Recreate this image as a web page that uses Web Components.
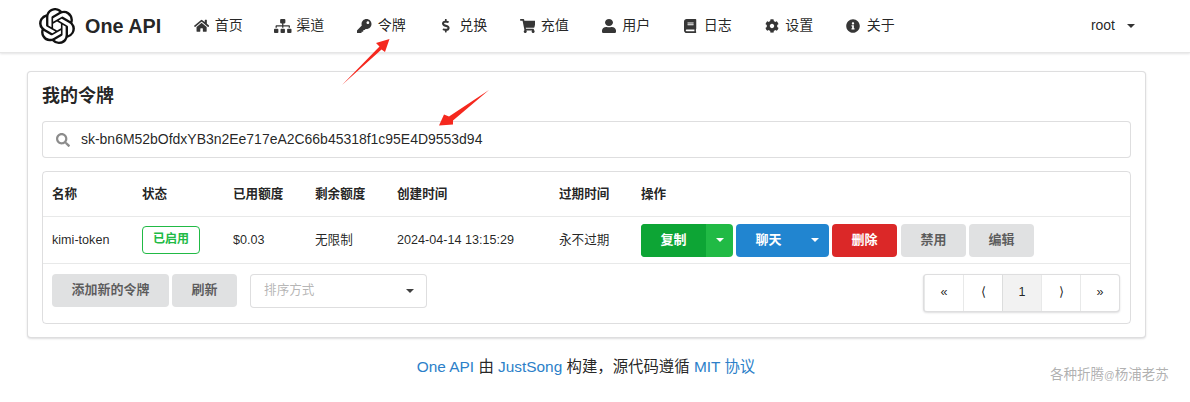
<!DOCTYPE html>
<html lang="zh">
<head>
<meta charset="utf-8">
<title>One API</title>
<style>
html,body{margin:0;padding:0;background:#fff;}
body{font:14px/1.4285 "Liberation Sans","Noto Sans CJK SC",sans-serif;color:rgba(0,0,0,.87);width:1190px;height:402px;overflow:hidden;position:relative;}
</style>
</head>
<body>
<app-nav></app-nav>
<token-page></token-page>
<app-footer></app-footer>
<water-mark>各种折腾<small>@</small>杨浦老苏</water-mark>
<red-arrow points="342,85 381.5,49.5 385,52 389.5,39 376,43 379.5,46.5"></red-arrow>
<red-arrow points="489,90 453,120.5 453,124.5 439,125.5 444,114.5 449,116.5"></red-arrow>
<script>
const ICONS={
home:['0 0 576 512','M280.37 148.26L96 300.11V464a16 16 0 0 0 16 16l112.06-.29a16 16 0 0 0 15.92-16V368a16 16 0 0 1 16-16h64a16 16 0 0 1 16 16v95.64a16 16 0 0 0 16 16.05L464 480a16 16 0 0 0 16-16V300L295.67 148.26a12.19 12.19 0 0 0-15.3 0zM571.6 251.47L488 182.56V44.05a12 12 0 0 0-12-12h-56a12 12 0 0 0-12 12v72.61L318.47 43a48 48 0 0 0-61 0L4.34 251.47a12 12 0 0 0-1.6 16.9l25.5 31A12 12 0 0 0 45.15 301l235.22-193.74a12.19 12.19 0 0 1 15.3 0L530.9 301a12 12 0 0 0 16.9-1.6l25.5-31a12 12 0 0 0-1.7-16.93z'],
sitemap:['0 0 640 512','M128 352H32c-17.67 0-32 14.33-32 32v96c0 17.67 14.33 32 32 32h96c17.67 0 32-14.33 32-32v-96c0-17.67-14.33-32-32-32zm-24-80h192v48h48v-48h192v48h48v-57.59c0-21.17-17.23-38.41-38.41-38.41H344v-64h40c17.67 0 32-14.33 32-32V32c0-17.67-14.33-32-32-32H256c-17.67 0-32 14.33-32 32v96c0 17.67 14.33 32 32 32h40v64H94.41C73.23 224 56 241.23 56 262.41V320h48v-48zm264 80h-96c-17.67 0-32 14.33-32 32v96c0 17.67 14.33 32 32 32h96c17.67 0 32-14.33 32-32v-96c0-17.67-14.33-32-32-32zm240 0h-96c-17.67 0-32 14.33-32 32v96c0 17.67 14.33 32 32 32h96c17.67 0 32-14.33 32-32v-96c0-17.67-14.33-32-32-32z'],
key:['0 0 512 512','M512 176.001C512 273.203 433.202 352 336 352c-11.22 0-22.19-1.062-32.827-3.069l-24.012 27.014A23.999 23.999 0 0 1 261.223 384H224v40c0 13.255-10.745 24-24 24h-40v40c0 13.255-10.745 24-24 24H24c-13.255 0-24-10.745-24-24v-78.059c0-6.365 2.529-12.47 7.029-16.971l161.802-161.802C163.108 213.814 160 195.271 160 176 160 78.798 238.797.001 335.999 0 433.488-.001 512 78.511 512 176.001zM336 128c0 26.51 21.49 48 48 48s48-21.49 48-48-21.49-48-48-48-48 21.49-48 48z'],
dollar:['0 0 288 512','M209.2 233.4l-108-31.6C88.7 198.2 80 186.5 80 173.5c0-16.3 13.2-29.5 29.5-29.5h66.3c12.2 0 24.2 3.7 34.2 10.5 6.1 4.1 14.3 3.1 19.5-2l34.8-34c7.1-6.9 6.1-18.4-1.8-24.5C238 74.8 207.4 64.1 176 64V16c0-8.8-7.2-16-16-16h-32c-8.8 0-16 7.2-16 16v48h-2.5C45.8 64-5.4 118.7.5 183.6c4.2 46.1 39.4 83.6 83.8 96.6l102.5 30c12.5 3.7 21.2 15.3 21.2 28.3 0 16.3-13.2 29.5-29.5 29.5h-66.3C100 368 88 364.3 78 357.5c-6.1-4.1-14.3-3.1-19.5 2l-34.8 34c-7.1 6.9-6.1 18.4 1.8 24.5 24.5 19.2 55.1 29.9 86.5 30v48c0 8.8 7.2 16 16 16h32c8.8 0 16-7.2 16-16v-48.2c46.6-.9 90.3-28.6 105.7-72.7 21.5-61.6-14.6-124.8-72.5-141.7z'],
cart:['0 0 576 512','M528.12 301.319l47.273-208C578.806 78.301 567.391 64 551.99 64H159.208l-9.166-44.81C147.758 8.021 137.93 0 126.529 0H24C10.745 0 0 10.745 0 24v16c0 13.255 10.745 24 24 24h69.883l70.248 343.435C147.325 417.1 136 435.222 136 456c0 30.928 25.072 56 56 56s56-25.072 56-56c0-15.674-6.447-29.835-16.824-40h209.647C430.447 426.165 424 440.326 424 456c0 30.928 25.072 56 56 56s56-25.072 56-56c0-22.172-12.888-41.332-31.579-50.405l5.517-24.276c3.413-15.018-8.002-29.319-23.403-29.319H218.117l-6.545-32h293.145c11.206 0 20.92-7.754 23.403-18.681z'],
user:['0 0 448 512','M224 256c70.7 0 128-57.3 128-128S294.7 0 224 0 96 57.3 96 128s57.3 128 128 128zm89.6 32h-16.7c-22.2 10.2-46.9 16-72.9 16s-50.6-5.8-72.9-16h-16.7C60.2 288 0 348.2 0 422.4V464c0 26.5 21.5 48 48 48h352c26.5 0 48-21.5 48-48v-41.6c0-74.2-60.2-134.4-134.4-134.4z'],
book:['0 0 448 512','M448 360V24c0-13.3-10.7-24-24-24H96C43 0 0 43 0 96v320c0 53 43 96 96 96h328c13.3 0 24-10.7 24-24v-16c0-7.5-3.5-14.3-8.9-18.7-4.2-15.4-4.2-59.3 0-74.7 5.4-4.3 8.9-11.1 8.9-18.6zM128 134c0-3.3 2.7-6 6-6h212c3.3 0 6 2.7 6 6v20c0 3.3-2.7 6-6 6H134c-3.3 0-6-2.7-6-6v-20zm0 64c0-3.3 2.7-6 6-6h212c3.3 0 6 2.7 6 6v20c0 3.3-2.7 6-6 6H134c-3.3 0-6-2.7-6-6v-20zm253.4 250H96c-17.7 0-32-14.3-32-32 0-17.6 14.4-32 32-32h285.4c-1.9 17.1-1.9 46.9 0 64z'],
cog:['0 0 512 512','M487.4 315.7l-42.6-24.6c4.3-23.2 4.3-47 0-70.2l42.6-24.6c4.9-2.8 7.1-8.6 5.5-14-11.1-35.6-30-67.8-54.7-94.6-3.8-4.1-10-5.1-14.8-2.3L380.8 110c-17.9-15.4-38.5-27.3-60.8-35.1V25.8c0-5.6-3.9-10.5-9.4-11.7-36.7-8.2-74.3-7.8-109.2 0-5.5 1.2-9.4 6.1-9.4 11.7V75c-22.2 7.9-42.8 19.8-60.8 35.1L88.7 85.5c-4.9-2.8-11-1.9-14.8 2.3-24.7 26.7-43.6 58.9-54.7 94.6-1.7 5.4.6 11.2 5.5 14L67.3 221c-4.3 23.2-4.3 47 0 70.2l-42.6 24.6c-4.9 2.8-7.1 8.6-5.5 14 11.1 35.6 30 67.8 54.7 94.6 3.8 4.1 10 5.1 14.8 2.3l42.6-24.6c17.9 15.4 38.5 27.3 60.8 35.1v49.2c0 5.6 3.9 10.5 9.4 11.7 36.7 8.2 74.3 7.8 109.2 0 5.5-1.2 9.4-6.1 9.4-11.7v-49.2c22.2-7.9 42.8-19.8 60.8-35.1l42.6 24.6c4.9 2.8 11 1.9 14.8-2.3 24.7-26.7 43.6-58.9 54.7-94.6 1.5-5.5-.7-11.3-5.6-14.1zM256 336c-44.1 0-80-35.9-80-80s35.9-80 80-80 80 35.9 80 80-35.9 80-80 80z'],
info:['0 0 512 512','M256 8C119.043 8 8 119.083 8 256c0 136.997 111.043 248 248 248s248-111.003 248-248C504 119.083 392.957 8 256 8zm0 110c23.196 0 42 18.804 42 42s-18.804 42-42 42-42-18.804-42-42 18.804-42 42-42zm56 254c0 6.627-5.373 12-12 12h-88c-6.627 0-12-5.373-12-12v-24c0-6.627 5.373-12 12-12h12v-64h-12c-6.627 0-12-5.373-12-12v-24c0-6.627 5.373-12 12-12h64c6.627 0 12 5.373 12 12v100h12c6.627 0 12 5.373 12 12v24z'],
search:['0 0 512 512','M505 442.7L405.3 343c-4.5-4.5-10.6-7-17-7H372c27.6-35.3 44-79.7 44-128C416 93.1 322.9 0 208 0S0 93.1 0 208s93.1 208 208 208c48.3 0 92.7-16.4 128-44v16.3c0 6.4 2.5 12.5 7 17l99.7 99.7c9.4 9.4 24.6 9.4 33.9 0l28.3-28.3c9.4-9.4 9.4-24.6.1-34zM208 336c-70.7 0-128-57.2-128-128 0-70.7 57.2-128 128-128 70.7 0 128 57.2 128 128 0 70.7-57.2 128-128 128z'],
logo:['0 0 24 24','M22.2819 9.8211a5.9847 5.9847 0 0 0-.5157-4.9108 6.0462 6.0462 0 0 0-6.5098-2.9A6.0651 6.0651 0 0 0 4.9807 4.1818a5.9847 5.9847 0 0 0-3.9977 2.9 6.0462 6.0462 0 0 0 .7427 7.0966 5.98 5.98 0 0 0 .511 4.9107 6.051 6.051 0 0 0 6.5146 2.9001A5.9847 5.9847 0 0 0 13.2599 24a6.0557 6.0557 0 0 0 5.7718-4.2058 5.9894 5.9894 0 0 0 3.9977-2.9001 6.0557 6.0557 0 0 0-.7475-7.0729zm-9.022 12.6081a4.4755 4.4755 0 0 1-2.8764-1.0408l.1419-.0804 4.7783-2.7582a.7948.7948 0 0 0 .3927-.6813v-6.7369l2.02 1.1686a.071.071 0 0 1 .038.052v5.5826a4.504 4.504 0 0 1-4.4945 4.4944zm-9.6607-4.1254a4.4708 4.4708 0 0 1-.5346-3.0137l.142.0852 4.783 2.7582a.7712.7712 0 0 0 .7806 0l5.8428-3.3685v2.3324a.0804.0804 0 0 1-.0332.0615L9.74 19.9502a4.4992 4.4992 0 0 1-6.1408-1.6464zM2.3408 7.8956a4.485 4.485 0 0 1 2.3655-1.9728V11.6a.7664.7664 0 0 0 .3879.6765l5.8144 3.3543-2.0201 1.1685a.0757.0757 0 0 1-.071 0l-4.8303-2.7865A4.504 4.504 0 0 1 2.3408 7.872zm16.5963 3.8558L13.1038 8.364 15.1192 7.2a.0757.0757 0 0 1 .071 0l4.8303 2.7913a4.4944 4.4944 0 0 1-.6765 8.1042v-5.6772a.79.79 0 0 0-.407-.667zm2.0107-3.0231l-.142-.0852-4.7735-2.7818a.7759.7759 0 0 0-.7854 0L9.409 9.2297V6.8974a.0662.0662 0 0 1 .0284-.0615l4.8303-2.7866a4.4992 4.4992 0 0 1 6.6802 4.66zM8.3065 12.863l-2.02-1.1638a.0804.0804 0 0 1-.038-.0567V6.0742a4.4992 4.4992 0 0 1 7.3757-3.4537l-.142.0805L8.704 5.459a.7948.7948 0 0 0-.3927.6813zm1.0976-2.3654l2.602-1.4998 2.6069 1.4998v2.9994l-2.5974 1.4997-2.6067-1.4997Z']
};
function define(name,css,html){
  customElements.define(name,class extends HTMLElement{
    connectedCallback(){
      if(this.shadowRoot)return;
      const r=this.attachShadow({mode:'open'});
      r.innerHTML='<style>'+css+'</style>'+(typeof html==='function'?html(this):html);
    }
  });
}
const svg=(n,h,w)=>`<svg viewBox="${ICONS[n][0]}" ${w?`preserveAspectRatio="none" width="${w}"`:''} style="height:${h}px;${w?'':'width:auto;'}display:block;flex:none;fill:currentColor" aria-hidden="true"><path d="${ICONS[n][1]}"/></svg>`;

define('ui-icon',':host{display:inline-flex;align-items:center;justify-content:center;}',
  e=>svg(e.getAttribute('name'),+e.getAttribute('size')||14,+e.getAttribute('w')||0));

define('nav-item',
  `:host{display:flex;align-items:center;height:100%;padding:0 16px;color:rgba(0,0,0,.87);font-size:14px;}
   ui-icon{width:16.5px;margin-right:5px;flex:none;opacity:.9;}`,
  e=>`<ui-icon name="${e.getAttribute('icon')}" size="${e.getAttribute('size')||14}" w="${e.getAttribute('w')||0}"></ui-icon><slot></slot>`);

define('app-nav',
  `:host{display:flex;align-items:center;height:53px;box-sizing:border-box;background:#fff;border-bottom:1px solid #e6e6e6;box-shadow:0 1px 2px rgba(34,36,38,.12);padding-left:23px;padding-right:55px;}
   .brand{display:flex;align-items:center;height:100%;padding:0 16px;font:bold 19.8px "Liberation Sans",sans-serif;color:rgba(0,0,0,.87);gap:10px;}
   .brand svg{width:36px;height:36px;fill:#111;flex:none;}
   .right{margin-left:auto;display:flex;align-items:center;gap:12px;color:rgba(0,0,0,.87);}
   .caret{width:0;height:0;border:4px solid transparent;border-top:4.5px solid rgba(0,0,0,.8);border-bottom:0;}`,
  `<div class="brand"><svg viewBox="0 0 24 24"><path d="${ICONS.logo[1]}"/></svg><span>One API</span></div>
   <nav-item icon="home" size="13.5">首页</nav-item><nav-item icon="sitemap">渠道</nav-item><nav-item icon="key" size="14.5">令牌</nav-item>
   <nav-item icon="dollar" size="13.5">兑换</nav-item><nav-item icon="cart">充值</nav-item><nav-item icon="user" w="14">用户</nav-item>
   <nav-item icon="book">日志</nav-item><nav-item icon="cog">设置</nav-item><nav-item icon="info">关于</nav-item>
   <div class="right"><span>root</span><span class="caret"></span></div>`);

define('ui-btn',
  `:host{display:inline-flex;align-items:center;justify-content:center;box-sizing:border-box;height:33px;padding:0 19.5px;border-radius:4px;font-size:13px;font-weight:bold;background:#e0e1e2;color:rgba(0,0,0,.6);white-space:nowrap;}
   :host([tone=red]){background:#db2828;color:#fff;}`,
  `<slot></slot>`);

define('split-btn',
  `:host{display:inline-flex;height:33px;border-radius:4px;overflow:hidden;color:#fff;font-size:13px;font-weight:bold;background:var(--c);}
   .main{display:flex;align-items:center;justify-content:center;background:var(--m,transparent);width:var(--w);}
   .drop{display:flex;align-items:center;justify-content:center;width:var(--d);}
   .caret{width:0;height:0;border:4px solid transparent;border-top:4.5px solid #fff;border-bottom:0;}`,
  `<div class="main"><slot></slot></div><div class="drop"><span class="caret"></span></div>`);

define('status-label',
  `:host{display:inline-flex;align-items:center;box-sizing:border-box;height:28px;padding:0 10px;border:1px solid #21ba45;border-radius:4px;color:#21ba45;font-size:12px;font-weight:bold;background:#fff;}`,
  `<slot></slot>`);

define('search-box',
  `:host{display:flex;align-items:center;box-sizing:border-box;height:37px;border:1px solid rgba(34,36,38,.15);border-radius:4px;background:#fff;padding-left:13px;gap:11px;font-size:14px;color:rgba(0,0,0,.87);}
   ui-icon{color:rgba(0,0,0,.45);}`,
  `<ui-icon name="search" size="14"></ui-icon><span style="letter-spacing:-.02px"><slot></slot></span>`);

define('sort-select',
  `:host{display:flex;align-items:center;justify-content:space-between;box-sizing:border-box;width:177px;height:34px;border:1px solid rgba(34,36,38,.15);border-radius:4px;background:#fff;padding:0 12px 0 13px;font-size:12.6px;color:rgba(150,150,150,.7);margin-left:13px;}
   .caret{width:0;height:0;border:4px solid transparent;border-top:4.5px solid rgba(0,0,0,.75);border-bottom:0;}`,
  `<slot></slot><span class="caret"></span>`);

define('page-nav',
  `:host{display:flex;box-sizing:border-box;height:38px;border:1px solid rgba(34,36,38,.15);border-radius:4px;box-shadow:0 1px 2px rgba(34,36,38,.15);background:#fff;font-size:12.6px;overflow:hidden;}
   span{display:flex;align-items:center;justify-content:center;width:38px;border-left:1px solid rgba(34,36,38,.1);color:rgba(0,0,0,.87);}
   span:first-child{border-left:0;}
   .on{background:#f2f2f2;}`,
  `<span>«</span><span>⟨</span><span class="on">1</span><span>⟩</span><span>»</span>`);

define('token-table',
  `:host{display:block;font-size:12.6px;border:1px solid rgba(34,36,38,.15);border-radius:4px;margin-top:13px;}
   table{width:100%;border-collapse:separate;border-spacing:0;table-layout:fixed;}
   td,th{padding:0 10px 0 9px;text-align:left;white-space:nowrap;border-bottom:1px solid rgba(34,36,38,.1);}
   th{height:44px;box-sizing:border-box;padding-top:1px;font-weight:bold;color:rgba(0,0,0,.87);}
   thead th{height:45px;}
   tbody td{height:46px;}
   tbody td.t{padding-top:1px;box-sizing:border-box;height:47px;}
   tfoot td{border-bottom:0;height:59px;vertical-align:top;padding-top:10px;box-sizing:border-box;}
   .acts{display:flex;align-items:center;gap:3px;}
   .foot{display:flex;align-items:flex-start;}
   page-nav{margin-left:auto;}`,
  `<table>
    <colgroup><col style="width:90px"><col style="width:91px"><col style="width:82px"><col style="width:82px"><col style="width:162px"><col style="width:82px"><col></colgroup>
    <thead><tr><th>名称</th><th>状态</th><th>已用额度</th><th>剩余额度</th><th>创建时间</th><th>过期时间</th><th>操作</th></tr></thead>
    <tbody><tr><td class="t">kimi-token</td><td><status-label>已启用</status-label></td><td class="t">$0.03</td><td class="t">无限制</td><td class="t">2024-04-14 13:15:29</td><td class="t">永不过期</td>
      <td><div class="acts">
        <split-btn style="--c:#21ba45;--m:#0da535;--w:65px;--d:27px">复制</split-btn>
        <split-btn style="--c:#2185d0;--w:65px;--d:28px">聊天</split-btn>
        <ui-btn tone="red">删除</ui-btn><ui-btn style="margin-left:1px">禁用</ui-btn><ui-btn>编辑</ui-btn>
      </div></td></tr></tbody>
    <tfoot><tr><td colspan="7"><div class="foot">
        <ui-btn>添加新的令牌</ui-btn><ui-btn style="margin-left:3px">刷新</ui-btn>
        <sort-select>排序方式</sort-select><page-nav></page-nav>
    </div></td></tr></tfoot>
  </table>`);

define('token-page',
  `:host{display:block;box-sizing:border-box;width:1119px;margin:18px 0 0 27px;height:267px;padding:14px;border:1px solid rgba(34,36,38,.15);border-radius:4px;box-shadow:0 1px 2px rgba(34,36,38,.15);background:#fff;}
   h2{margin:0 0 15px;font-size:18px;line-height:20px;font-weight:bold;color:rgba(0,0,0,.87);}`,
  `<h2>我的令牌</h2><search-box>sk-bn6M52bOfdxYB3n2Ee717eA2C66b45318f1c95E4D9553d94</search-box><token-table></token-table>`);

define('app-footer',
  `:host{display:block;text-align:center;margin-top:19px;font-size:15.4px;line-height:20px;color:rgba(0,0,0,.87);width:1172px;}
   a{color:#2c7fc9;text-decoration:none;}`,
  `<a href="#">One API</a> 由 <a href="#">JustSong</a> 构建，源代码遵循 <a href="#">MIT 协议</a>`);

define('water-mark',
  `:host{position:absolute;left:1050px;top:366px;font-size:13.5px;line-height:18px;color:rgba(110,110,110,.55);white-space:nowrap;}
   ::slotted(small){font-size:10.5px;}`,
  `<slot></slot>`);

define('red-arrow',
  `:host{position:absolute;left:0;top:0;width:1190px;height:402px;pointer-events:none;display:block;}
   svg{display:block;}`,
  e=>`<svg width="1190" height="402"><polygon points="${e.getAttribute('points')}" fill="#f5281e"/></svg>`);
</script>
</body>
</html>
